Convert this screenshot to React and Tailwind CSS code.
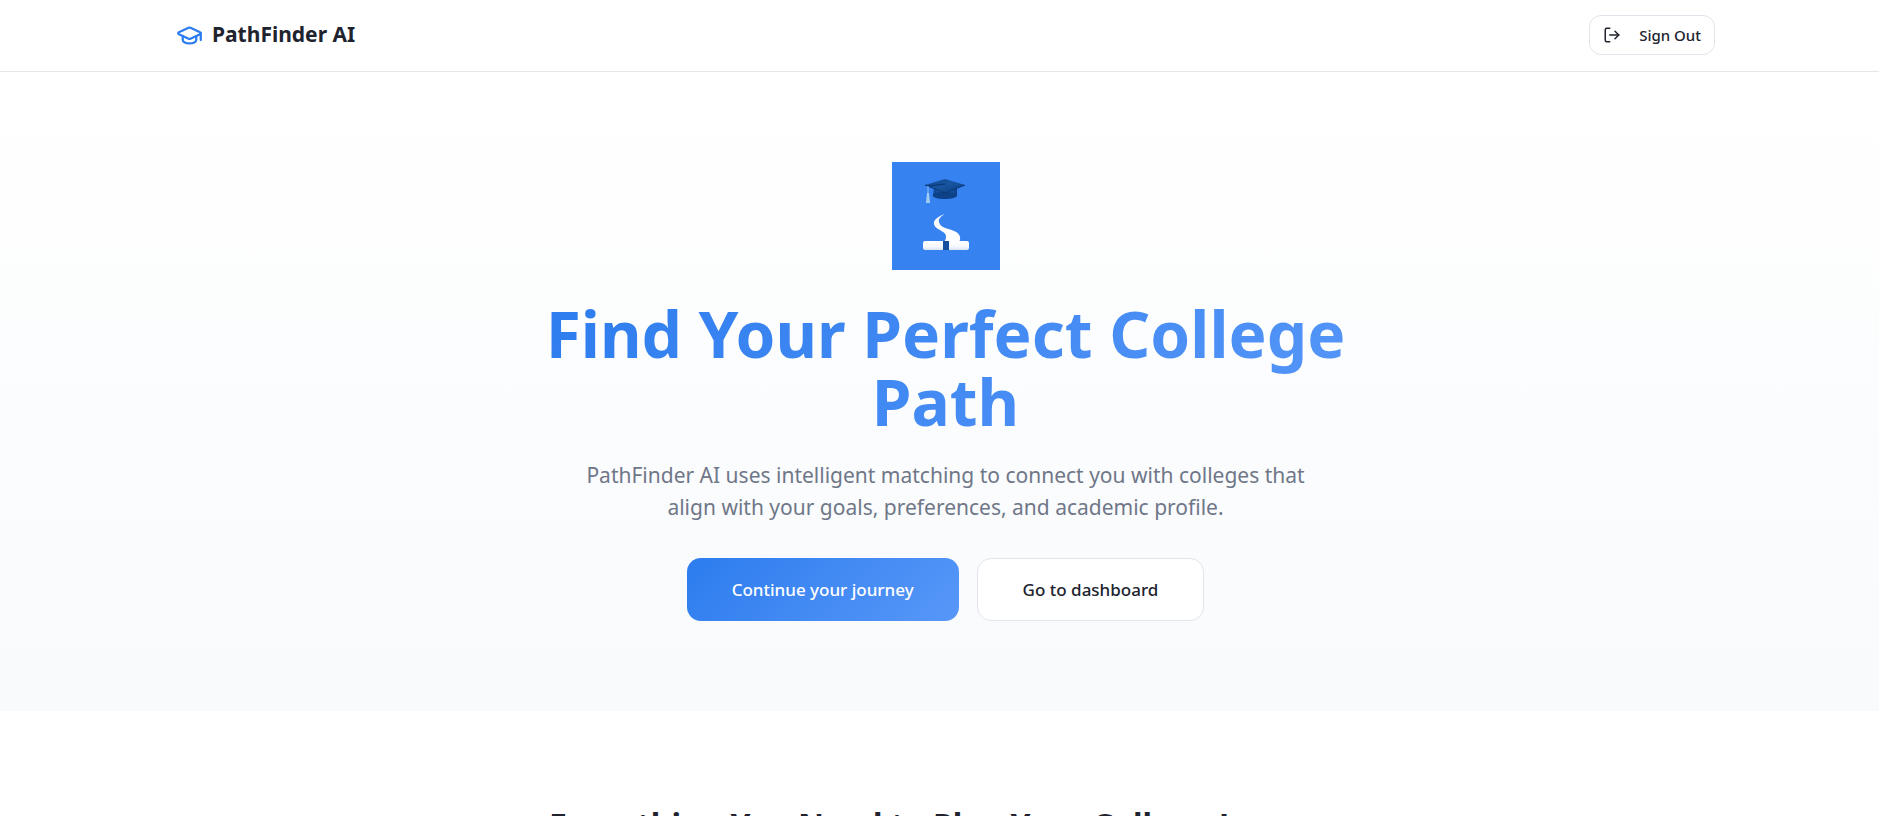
import React from 'react';
import { GraduationCap, LogOut } from 'lucide-react';

function HeroLogo() {
    return (
        <svg viewBox="0 0 108 108" className="size-[108px]" role="img" aria-label="PathFinder AI logo">
            <defs>
                <linearGradient id="capTop" x1="0" y1="0" x2="1" y2="1">
                    <stop offset="0" stopColor="#124a94" />
                    <stop offset="0.5" stopColor="#17549f" />
                    <stop offset="1" stopColor="#0c3c7c" />
                </linearGradient>
                <linearGradient id="capBase" x1="0" y1="0" x2="1" y2="0">
                    <stop offset="0" stopColor="#0d4595" />
                    <stop offset="0.5" stopColor="#2467c0" />
                    <stop offset="1" stopColor="#0b4089" />
                </linearGradient>
                <linearGradient id="scroll" x1="0" y1="0" x2="0" y2="1">
                    <stop offset="0" stopColor="#ffffff" />
                    <stop offset="0.6" stopColor="#f6f9fd" />
                    <stop offset="1" stopColor="#d9e4f2" />
                </linearGradient>
            </defs>
            <rect width="108" height="108" fill="#3682f1" />
            {/* Cap */}
            <path d="M42 25 L41 34 C44 38 61 38 65 34 L65 25 L53 30 Z" fill="url(#capBase)" />
            <path d="M41 32 C47 29 59 29 65 32 L65 34 C61 38 44 38 41 34 Z" fill="#0d4288" />
            <path d="M33 23 L53 17 L73 23 L53 31 Z" fill="url(#capTop)" />
            <path d="M33 23 L53 31 L73 23" fill="none" stroke="#0a3672" strokeWidth="1" />
            <path d="M53 22 L36 24" fill="none" stroke="#0a3672" strokeWidth="1" />
            <path d="M36 24 L36 32" fill="none" stroke="#8fbcf5" strokeWidth="1" />
            <path d="M35 31 H37 L38 41 H34 Z" fill="#a5cdf2" />
            {/* Path */}
            <path
                d="M53 52 C47 54 41 58 42 62 C43 68 55 69 54 75 C54 77 53 79 52 80 H67 C70 75 67 71 62 69 C56 66 48 66 47 60 C46 57 49 54 53 52 Z"
                fill="#ffffff"
            />
            {/* Diploma */}
            <rect x="31" y="79" width="46" height="9" rx="2" fill="url(#scroll)" />
            <rect x="51" y="79" width="6" height="9" fill="#154f9f" />
        </svg>
    );
}

export default function App() {
    return (
        <div className="min-h-screen bg-white text-[#20232e] font-['Noto_Sans','Open_Sans',sans-serif]">
            <header className="border-b border-gray-200 pb-px pl-3">
                <div className="mx-auto flex h-[70px] max-w-[1575px] items-center justify-between px-[18px]">
                    <a href="#" className="flex items-center gap-[9px]">
                        <GraduationCap className="size-[27px] text-[#2b7cee]" />
                        <span className="text-[21px] font-bold">PathFinder AI</span>
                    </a>
                    <button className="flex h-10 items-center gap-[18px] rounded-xl border border-[#e1e4eb] px-[13px] text-[15px] font-medium">
                        <LogOut className="size-[18px]" />
                        Sign Out
                    </button>
                </div>
            </header>

            <section className="flex flex-col items-center bg-linear-to-b from-white to-[#f8fafc] py-[90px] pl-3 text-center">
                <HeroLogo />
                <h1 className="mt-[30px] max-w-[864px] bg-linear-135 from-[#2b7cee] to-[#5797f8] bg-clip-text text-[64px] leading-[68px] font-bold text-transparent">
                    Find Your Perfect College Path
                </h1>
                <p className="mt-[23px] max-w-[756px] text-[21px] leading-8 text-[#6f7788]">
                    PathFinder AI uses intelligent matching to connect you with colleges that align with your goals, preferences, and academic profile.
                </p>
                <div className="mt-[35px] flex gap-[18px]">
                    <button className="h-[63px] rounded-[14px] bg-linear-135 from-[#2b7cee] to-[#5797f8] px-[45px] text-[17px] font-medium text-white">
                        Continue your journey
                    </button>
                    <button className="h-[63px] rounded-[14px] border border-[#e1e4eb] bg-white px-[45px] text-[17px] font-medium">
                        Go to dashboard
                    </button>
                </div>
            </section>

            <section className="py-[90px] pl-3 text-center">
                <h2 className="text-[32px] leading-12 font-bold">Everything You Need to Plan Your College Journey</h2>
            </section>
        </div>
    );
}
